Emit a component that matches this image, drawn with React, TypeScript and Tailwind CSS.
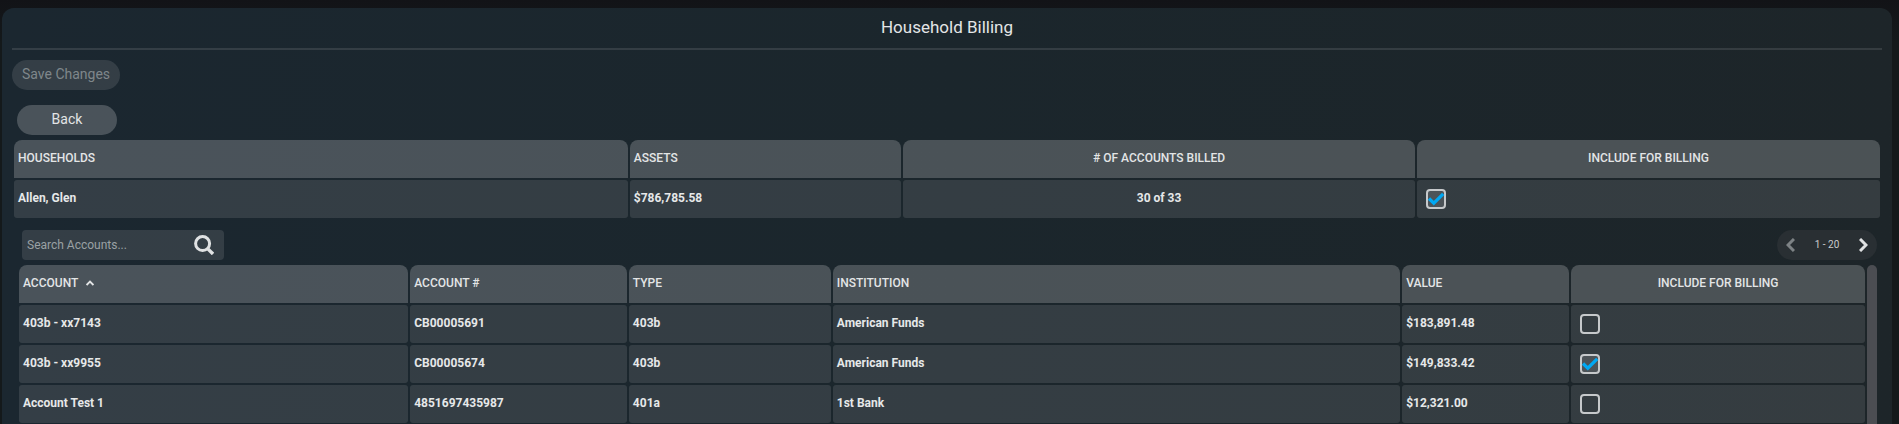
import React, { useState } from "react";

const households = [
  { name: "Allen, Glen", assets: "$786,785.58", billed: "30 of 33", included: true },
];

const accounts = [
  {
    name: "403b - xx7143",
    number: "CB00005691",
    type: "403b",
    institution: "American Funds",
    value: "$183,891.48",
    included: false,
  },
  {
    name: "403b - xx9955",
    number: "CB00005674",
    type: "403b",
    institution: "American Funds",
    value: "$149,833.42",
    included: true,
  },
  {
    name: "Account Test 1",
    number: "4851697435987",
    type: "401a",
    institution: "1st Bank",
    value: "$12,321.00",
    included: false,
  },
];

const headCell =
  "h-[38px] rounded-t-lg bg-[#fafafa]/21 px-1 pt-0 pb-0.5 text-[12px] leading-4 font-medium text-[#e3e5e6] uppercase";
const textCell =
  "h-[38px] rounded-[3px] bg-white/11 px-1 pt-0 pb-0.5 text-[12px] leading-4 font-bold text-[#e6e8e9]";
const checkCell = "h-[38px] rounded-[3px] bg-white/11 px-1 py-0";

type BillingCheckboxProps = {
  label: string;
  initial: boolean;
};

// Tick box used in the "include for billing" columns
const BillingCheckbox: React.FC<BillingCheckboxProps> = ({ label, initial }) => {
  const [checked, setChecked] = useState(initial);

  return (
    <span className="relative ml-[5px] block size-5">
      <input
        type="checkbox"
        aria-label={label}
        checked={checked}
        onChange={(e) => setChecked(e.target.checked)}
        className="block size-5 appearance-none rounded border-2 border-[#c6c9cb] checked:bg-white/12"
      />
      {checked && (
        <svg
          viewBox="0 0 20 20"
          className="pointer-events-none absolute inset-0 size-5"
          fill="none"
          stroke="#00a8f3"
          strokeWidth="3.2"
        >
          <path d="M3 9.5 7.8 14.2 17.2 4.8" />
        </svg>
      )}
    </span>
  );
};

const HouseholdTable: React.FC = () => (
  <table className="w-full table-fixed border-separate border-spacing-[2px] text-left">
    <colgroup>
      <col className="w-[33%]" />
      <col className="w-[14.6%]" />
      <col className="w-[27.5%]" />
      <col className="w-[24.9%]" />
    </colgroup>
    <thead>
      <tr>
        <th className={headCell}>Households</th>
        <th className={headCell}>Assets</th>
        <th className={`${headCell} text-center`}># of accounts billed</th>
        <th className={`${headCell} text-center`}>Include for billing</th>
      </tr>
    </thead>
    <tbody>
      {households.map((household) => (
        <tr key={household.name}>
          <td className={textCell}>{household.name}</td>
          <td className={textCell}>{household.assets}</td>
          <td className={`${textCell} text-center`}>{household.billed}</td>
          <td className={checkCell}>
            <BillingCheckbox
              label={`Include ${household.name}`}
              initial={household.included}
            />
          </td>
        </tr>
      ))}
    </tbody>
  </table>
);

const AccountTable: React.FC<{ query: string }> = ({ query }) => (
  <table className="min-w-0 flex-1 table-fixed border-separate border-spacing-[2px] text-left">
    <colgroup>
      <col className="w-[21.2%]" />
      <col className="w-[11.8%]" />
      <col className="w-[11%]" />
      <col className="w-[30.9%]" />
      <col className="w-[9.1%]" />
      <col className="w-[16%]" />
    </colgroup>
    <thead>
      <tr>
        <th className={headCell}>
          <button className="flex items-center gap-2 uppercase">
            Account
            <svg
              viewBox="0 0 8 6"
              className="h-1.5 w-2"
              fill="none"
              stroke="currentColor"
              strokeWidth="1.8"
            >
              <path d="M.6 5 4 1.6 7.4 5" />
            </svg>
          </button>
        </th>
        <th className={headCell}>Account #</th>
        <th className={headCell}>Type</th>
        <th className={headCell}>Institution</th>
        <th className={headCell}>Value</th>
        <th className={`${headCell} text-center`}>Include for billing</th>
      </tr>
    </thead>
    <tbody>
      {accounts
        .filter((account) =>
          account.name.toLowerCase().includes(query.toLowerCase()),
        )
        .map((account) => (
          <tr key={account.number}>
            <td className={textCell}>{account.name}</td>
            <td className={textCell}>{account.number}</td>
            <td className={textCell}>{account.type}</td>
            <td className={textCell}>{account.institution}</td>
            <td className={textCell}>{account.value}</td>
            <td className={checkCell}>
              <BillingCheckbox
                label={`Include ${account.name}`}
                initial={account.included}
              />
            </td>
          </tr>
        ))}
    </tbody>
  </table>
);

const App: React.FC = () => {
  const [query, setQuery] = useState("");

  return (
    <div className="flex h-screen flex-col overflow-hidden bg-linear-to-b from-[#121317] to-[#14191b] to-10% pt-2 pr-[7px] pl-0.5 font-['Roboto','Liberation_Sans',sans-serif]">
      <main className="flex-1 rounded-t-xl bg-linear-to-r from-[#1b2730] via-[#1b262c] to-[#1d2529] px-2.5">
        <h1 className="h-10 pt-[7px] text-center text-[17px] leading-6 text-[#e3e5e6]">
          Household Billing
        </h1>
        <div className="h-0.5 bg-white/11" />

        <div className="flex flex-col items-start gap-[15px] pt-2.5">
          <button
            disabled
            className="h-[30px] rounded-full bg-white/11 px-2.5 pb-0.5 text-[14px] leading-5 text-[#7f878b]"
          >
            Save Changes
          </button>
          <button className="ml-[5px] h-[30px] w-[100px] rounded-full bg-[#fafafa]/21 pb-0.5 text-[14px] leading-5 text-[#e3e5e6]">
            Back
          </button>
        </div>

        <div className="pt-[3px]">
          <HouseholdTable />
        </div>

        <section className="px-[5px] pt-2.5">
          <div className="flex items-center justify-between pl-[5px]">
            <label className="flex h-[30px] w-[202px] items-center rounded bg-white/11 pr-2.5 pl-[5px]">
              <input
                type="text"
                aria-label="Search accounts"
                placeholder="Search Accounts..."
                value={query}
                onChange={(e) => setQuery(e.target.value)}
                className="min-w-0 flex-1 bg-transparent text-[12px] leading-4 text-[#e3e5e6] outline-none placeholder:text-[#9aa1a4]"
              />
              <svg
                viewBox="0 0 20 20"
                className="size-5"
                fill="none"
                stroke="#e0e2e3"
                strokeWidth="3"
              >
                <circle cx="8.6" cy="8.6" r="7" />
                <path d="m13.6 13.6 5.4 5.4" strokeWidth="3.4" />
              </svg>
            </label>

            <nav className="flex h-[30px] w-[100px] items-center justify-between rounded-full bg-[#292f33] px-[9px] text-[10px] leading-4 text-[#c9cccd]">
              <button disabled aria-label="Previous page">
                <svg
                  viewBox="0 0 9 14"
                  className="h-3.5 w-[9px]"
                  fill="none"
                  stroke="#7d8285"
                  strokeWidth="3"
                >
                  <path d="M8 1 2 7l6 6" />
                </svg>
              </button>
              <span>1 - 20</span>
              <button aria-label="Next page">
                <svg
                  viewBox="0 0 9 14"
                  className="h-3.5 w-[9px]"
                  fill="none"
                  stroke="#e0e2e3"
                  strokeWidth="3"
                >
                  <path d="m1 1 6 6-6 6" />
                </svg>
              </button>
            </nav>
          </div>

          <div className="flex pt-[3px]">
            <AccountTable query={query} />
            <div className="mt-0.5 w-2.5 rounded-t-[5px] bg-[#4b4d52]" />
          </div>
        </section>
      </main>
    </div>
  );
};

export default App;
